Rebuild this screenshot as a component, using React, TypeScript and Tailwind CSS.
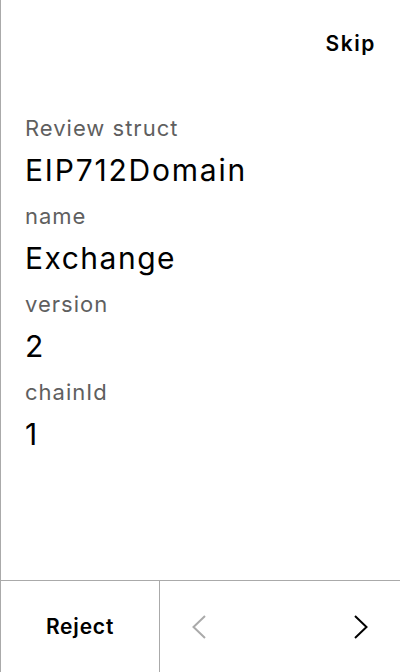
import React from "react";

const fields = [
  { label: "name", value: "Exchange" },
  { label: "version", value: "2" },
  { label: "chainId", value: "1" },
];

const Chevron = ({ dir, className }: { dir: "left" | "right"; className: string }) => (
  <svg width="14" height="24" viewBox="0 0 14 24" fill="none" className={className}>
    <polyline
      points={dir === "left" ? "13,1 1.5,12 13,23" : "1,1 12.5,12 1,23"}
      stroke="currentColor"
      strokeWidth="2"
    />
  </svg>
);

export default function App() {
  return (
    <div
      className="h-[672px] w-[400px] flex flex-col bg-white border-l border-[#aaaaaa] text-black"
      style={{ fontFamily: "Inter, 'Noto Sans', sans-serif" }}
    >
      <div className="flex justify-end pr-[24px] pt-[30px]">
        <button className="text-[21px] leading-[28px] font-semibold tracking-[1.6px]">Skip</button>
      </div>
      <div className="flex-1 px-6 pt-[56px]">
        <div className="mb-[14px]">
          <div className="text-[22px] leading-[28px] tracking-[1px] text-[#5f5f5f]">Review struct</div>
          <div className="mt-[10px] text-[30px] leading-[36px] tracking-[1.8px]">EIP712Domain</div>
        </div>
        {fields.map((f) => (
          <div key={f.label} className="mb-[14px]">
            <div className="text-[22px] leading-[28px] tracking-[1px] text-[#5f5f5f]">{f.label}</div>
            <div className="mt-[10px] text-[30px] leading-[36px] tracking-[1.5px]">{f.value}</div>
          </div>
        ))}
      </div>
      <div className="h-[92px] flex border-t border-[#aaaaaa]">
        <button className="w-[159px] border-r border-[#aaaaaa] flex items-center justify-center text-[21px] font-semibold tracking-[0.8px]">
          Reject
        </button>
        <div className="flex-1 flex items-center justify-between px-8">
          <Chevron dir="left" className="text-[#aaaaaa]" />
          <Chevron dir="right" className="text-black" />
        </div>
      </div>
    </div>
  );
}
